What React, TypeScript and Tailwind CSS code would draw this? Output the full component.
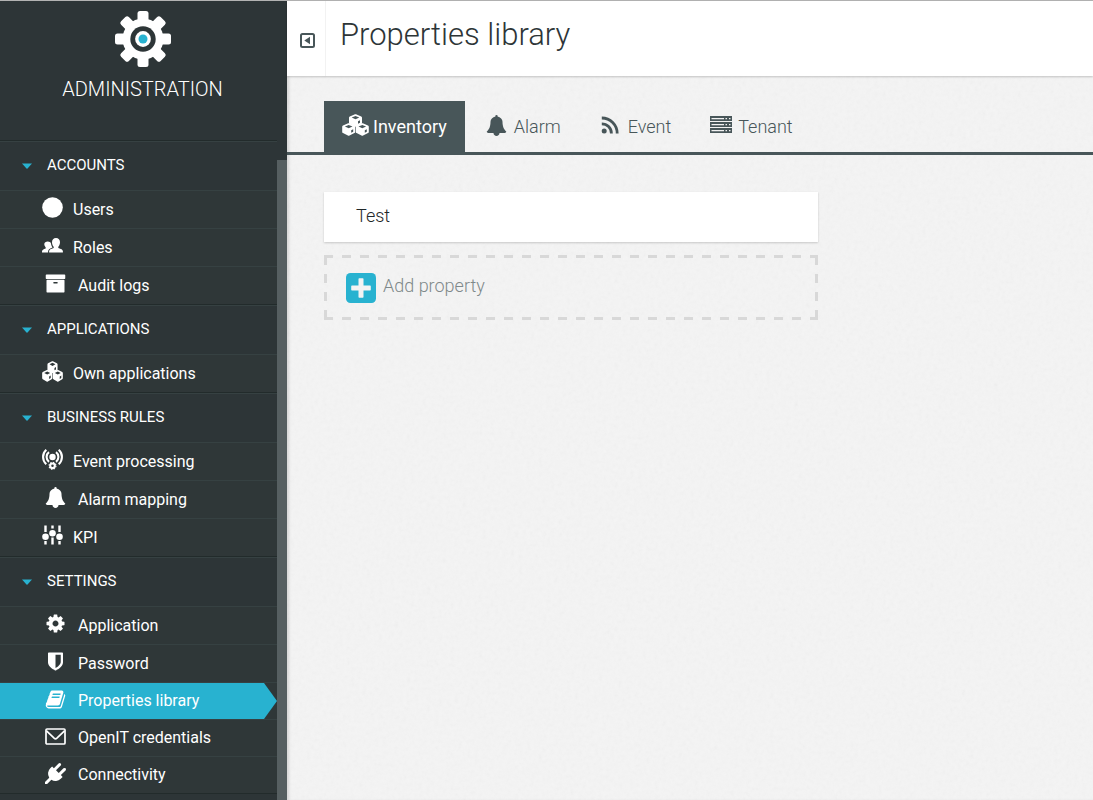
import React from "react";

type IconProps = { className?: string };

const BELL =
  "M1728 1408q0 52-38 90t-90 38h-448q0 106-75 181t-181 75-181-75-75-181h-448q-52 0-90-38t-38-90q50-42 91-88t85-119.500 74.500-158.500 50-206 19.500-260q0-152 117-282.500t307-158.500q-8-19-8-39 0-40 28-68t68-28 68 28 28 68q0 20-8 39 190 28 307 158.500t117 282.500q0 139 19.500 260t50 206 74.500 158.500 85 119.500 91 88z";
const COG =
  "M1152 896q0-106-75-181t-181-75-181 75-75 181 75 181 181 75 181-75 75-181zm512-109v222q0 12-8 23t-20 13l-185 28q-19 54-39 91 35 50 107 138 10 12 10 25t-9 23q-27 37-99 108t-94 71q-12 0-26-9l-138-108q-44 23-91 38-16 136-29 186-7 28-36 28h-222q-14 0-24.500-8.500t-11.500-21.500l-28-184q-49-16-90-37l-141 107q-10 9-25 9-14 0-25-11-126-114-165-168-7-10-7-23 0-12 8-23 15-21 51-66.500t54-70.500q-27-50-41-99l-183-27q-13-2-21-12.500t-8-23.500v-222q0-12 8-23t19-13l186-28q14-46 39-92-40-57-107-138-10-12-10-24 0-10 9-23 26-36 98.500-107.500t94.500-71.500q13 0 26 10l138 107q44-23 91-38 16-136 29-186 7-28 36-28h222q14 0 24.500 8.500t11.500 21.500l28 184q49 16 90 37l142-107q9-9 24-9 13 0 25 10 129 119 165 170 7 8 7 22 0 12-8 23-15 21-51 66.500t-54 70.500q26 50 41 98l183 28q13 2 21 12.500t8 23.500z";
const SHIELD =
  "M1344 960v-640h-448v1137q119-63 213-137 235-184 235-360zm192-768v768q0 86-33.500 170.500t-83 150-118 127.500-126.500 103-121 77.500-89.500 49.500-42.500 20q-12 6-26 6t-26-6q-16-7-42.500-20t-89.500-49.500-121-77.500-126.500-103-118-127.500-83-150-33.500-170.500v-768q0-26 19-45t45-19h1152q26 0 45 19t19 45z";
const BOOK =
  "M1703 478q40 57 18 129l-275 906q-19 64-76.500 107.500t-122.500 43.500h-923q-77 0-148.500-53.500t-99.500-131.500q-24-67-2-127 0-4 3-27t4-37q1-8-3-21.500t-3-19.500q2-11 8-21t16.500-23.500 16.500-23.500q23-38 45-91.500t30-91.500q3-10 .5-30t-.5-28q3-11 17-28t17-23q21-36 42-92t25-90q1-9-2.500-32t.5-28q4-13 22-30.500t22-22.500q19-26 42.500-84.500t27.500-96.500q1-8-3-25.500t-2-26.500q2-8 9-18t18-23 17-21q8-12 16.500-30.500t15-35 16-36 19.500-32 26.500-23.500 36-11.500 47.500 5.500l-1 3q38-9 51-9h761q74 0 114 56t18 130l-274 906q-36 119-71.500 153.500t-128.500 34.500h-869q-27 0-38 15-11 16-1 43 24 70 144 70h923q29 0 56-15.500t35-41.500l300-987q7-22 5-57 38 15 59 43zm-1064 2q-4 13 2 22.500t20 9.500h608q13 0 25.500-9.500t16.500-22.500l21-64q4-13-2-22.500t-20-9.500h-608q-13 0-25.500 9.500t-16.500 22.500zm-83 256q-4 13 2 22.500t20 9.500h608q13 0 25.500-9.500t16.500-22.500l21-64q4-13-2-22.500t-20-9.500h-608q-13 0-25.500 9.500t-16.500 22.500z";
const PLUG =
  "M1755 453q37 38 37 90.500t-37 90.500l-401 400 150 150-160 160q-163 163-389.500 186.500t-411.500-100.500l-362 362h-181v-181l362-362q-124-185-100.500-411.500t186.500-389.500l160-160 150 150 400-401q38-37 91-37t90 37 37 90.500-37 90.500l-400 401 234 234 401-400q38-37 91-37t90 37z";
const ARCHIVE =
  "M1088 832q0-26-19-45t-45-19h-256q-26 0-45 19t-19 45 19 45 45 19h256q26 0 45-19t19-45zm576-192v960q0 26-19 45t-45 19h-1408q-26 0-45-19t-19-45v-960q0-26 19-45t45-19h1408q26 0 45 19t19 45zm64-448v256q0 26-19 45t-45 19h-1536q-26 0-45-19t-19-45v-256q0-26 19-45t45-19h1536q26 0 45 19t19 45z";

const glyph = (d: string) =>
  function Glyph({ className }: IconProps) {
    return (
      <svg viewBox="0 0 1792 1792" fill="currentColor" fillRule="evenodd" aria-hidden="true" className={className}>
        <path d={d} />
      </svg>
    );
  };

const BellIcon = glyph(BELL);
const CogIcon = glyph(COG);
const ShieldIcon = glyph(SHIELD);
const BookIcon = glyph(BOOK);
const PlugIcon = glyph(PLUG);
const ArchiveIcon = glyph(ARCHIVE);

function CircleIcon({ className }: IconProps) {
  return (
    <svg viewBox="0 0 21 21" fill="currentColor" aria-hidden="true" className={className}>
      <circle cx="10.500" cy="10.500" r="10.300" />
    </svg>
  );
}

function PeopleIcon({ className }: IconProps) {
  return (
    <svg viewBox="0 0 21 21" fill="currentColor" aria-hidden="true" className={className}>
      <path d="M14 3c2.500 0 4 1.700 4 4.200 0 1.800-.7 3.500-1.700 4.500v1.200c2.800.8 4.600 1.700 4.600 3.400v1.200H7.100v-1.200c0-1.700 1.800-2.600 4.600-3.400v-1.200c-1-1-1.700-2.700-1.700-4.500C10 4.700 11.500 3 14 3z" />
      <path d="M5.800 6.500c1.600 0 2.800.7 3.200 1.900.1 1.400.6 2.900 1.500 4-2.500.8-4.200 2-4.400 3.900v1.200H0v-1c0-1.300 1.500-2.200 3.700-2.900v-1.200c-.9-.9-1.400-2.100-1.400-3.300 0-1.600 1.500-2.600 3.500-2.600z" />
    </svg>
  );
}

function Cube({ x, y }: { x: number; y: number }) {
  return (
    <path
      transform={`translate(${x} ${y})`}
      fillRule="evenodd"
      d="M6 .3q.5-.3 1 0l5.200 2.100q.8.400.8 1.300v5.200q0 .8-.8 1.200L7.300 12.500q-.8.400-1.600 0L.8 10.100Q0 9.700 0 8.900V3.700q0-.9.8-1.300zM6.500 1.900 2.700 3.500 6.500 5.200l3.800-1.700zM9 7.300v2.500l2-1V6.300z"
    />
  );
}

function CubesIcon({ className }: IconProps) {
  return (
    <svg viewBox="0 0 27 22" fill="currentColor" preserveAspectRatio="none" aria-hidden="true" className={className}>
      <Cube x={7} y={0} />
      <Cube x={0.200} y={9} />
      <Cube x={13.800} y={9} />
    </svg>
  );
}

function BroadcastIcon({ className }: IconProps) {
  return (
    <svg viewBox="0 0 21 21" fill="none" stroke="currentColor" strokeWidth="2.100" aria-hidden="true" className={className}>
      <circle cx="10.500" cy="8" r="3.200" fill="currentColor" stroke="none" />
      <path d="M7 3.200a6 6 0 0 0 0 9.600M14 3.200a6 6 0 0 1 0 9.600M4.300.8C0 4.500 0 11.500 4.300 15.200M16.700.8c4.300 3.700 4.300 10.700 0 14.400" />
      <circle cx="10.500" cy="16.800" r="2.300" />
      <circle cx="10.500" cy="16.800" r="3.500" strokeWidth="1.100" strokeDasharray="1.400 1.350" />
    </svg>
  );
}

function SlidersIcon({ className }: IconProps) {
  return (
    <svg viewBox="0 0 21 21" fill="currentColor" aria-hidden="true" className={className}>
      <path d="M2.300.5h2.400V7H2.300zM2.300 16h2.400v3.500H2.300zM9.300.5h2.400v3H9.300zM9.300 12.500h2.400v7H9.300zM16.300.5h2.400V7h-2.400zM16.300 16h2.400v3.500h-2.400z" />
      <circle cx="3.500" cy="11.800" r="3.300" />
      <circle cx="10.500" cy="8.200" r="3.300" />
      <circle cx="17.500" cy="11.800" r="3.300" />
    </svg>
  );
}

function EnvelopeIcon({ className }: IconProps) {
  return (
    <svg viewBox="0 0 21 21" fill="none" stroke="currentColor" strokeWidth="1.700" aria-hidden="true" className={className}>
      <rect x="1" y="3" width="19" height="15" rx="1" />
      <path d="m1.500 4.800 7.600 7.400q1.400 1.200 2.800 0l7.600-7.400" />
    </svg>
  );
}

function RssIcon({ className }: IconProps) {
  return (
    <svg viewBox="0 0 18 18" fill="none" stroke="currentColor" strokeWidth="2.800" aria-hidden="true" className={className}>
      <circle cx="3.200" cy="14.900" r="2.500" fill="currentColor" stroke="none" />
      <path d="M.8 7.800a9.600 9.600 0 0 1 9.600 9.600M.8 2a15.400 15.400 0 0 1 15.400 15.400" />
    </svg>
  );
}

function ServerIcon({ className }: IconProps) {
  const rows = [0, 6, 12];
  return (
    <svg viewBox="0 0 22 18" fill="currentColor" fillRule="evenodd" aria-hidden="true" className={className}>
      {rows.map((y) => (
        <path key={y} transform={`translate(0 ${y})`} d="M0 0h22v5H0zM1.500 2v1.200h12.500V2zM15.500 2v1.200H17V2zM19 2v1.200h1.500V2z" />
      ))}
    </svg>
  );
}

function GearLogo() {
  const teeth = [0, 45, 90, 135];
  return (
    <svg viewBox="-28 -28 56 56" aria-hidden="true" className="size-14">
      <g fill="#fff">
        <circle r="20.500" />
        {teeth.map((angle) => (
          <rect key={angle} x="-5.500" y="-28" width="11" height="56" rx="2.500" transform={`rotate(${angle})`} />
        ))}
      </g>
      <circle r="12.700" fill="#2d3537" />
      <circle r="7.900" fill="#fff" />
      <circle r="4.500" fill="#28b2d0" />
    </svg>
  );
}

type Item = { label: string; icon: React.ComponentType<IconProps>; narrow?: boolean; active?: boolean };

const sections: { title: string; items: Item[] }[] = [
  {
    title: "ACCOUNTS",
    items: [
      { label: "Users", icon: CircleIcon },
      { label: "Roles", icon: PeopleIcon },
      { label: "Audit logs", icon: ArchiveIcon, narrow: true },
    ],
  },
  { title: "APPLICATIONS", items: [{ label: "Own applications", icon: CubesIcon }] },
  {
    title: "BUSINESS RULES",
    items: [
      { label: "Event processing", icon: BroadcastIcon },
      { label: "Alarm mapping", icon: BellIcon, narrow: true },
      { label: "KPI", icon: SlidersIcon },
    ],
  },
  {
    title: "SETTINGS",
    items: [
      { label: "Application", icon: CogIcon, narrow: true },
      { label: "Password", icon: ShieldIcon, narrow: true },
      { label: "Properties library", icon: BookIcon, narrow: true, active: true },
      { label: "OpenIT credentials", icon: EnvelopeIcon, narrow: true },
      { label: "Connectivity", icon: PlugIcon, narrow: true },
    ],
  },
];

const tabs = [
  { label: "Inventory", icon: CubesIcon, size: "h-[22px] w-[27px]", active: true },
  { label: "Alarm", icon: BellIcon, size: "size-[21px]" },
  { label: "Event", icon: RssIcon, size: "size-[18px]" },
  { label: "Tenant", icon: ServerIcon, size: "h-[18px] w-[22px]" },
];

function NavItem({ label, icon: Icon, narrow, active }: Item) {
  return (
    <li className="h-[38px] border-t border-[#364142] bg-[#2f3738] nth-[n+3]:h-[37px] nth-[3]:last:h-[38px]">
      <a
        href="#"
        aria-current={active ? "page" : undefined}
        className={`flex h-full items-center gap-[10px] pl-[42px] text-base leading-5 text-white ${
          active ? "bg-[#28b2d0] [clip-path:polygon(0_0,calc(100%-13px)_0,100%_50%,calc(100%-13px)_100%,0_100%)]" : ""
        }`}
      >
        <span className={`mb-1 flex justify-center ${narrow ? "w-[26px]" : "w-[21px]"}`}>
          <Icon className="size-[21px]" />
        </span>
        {label}
      </a>
    </li>
  );
}

function Sidebar() {
  return (
    <aside className="flex w-[287px] shrink-0 flex-col overflow-hidden bg-[#2d3537] text-white">
      <div className="flex h-[139px] shrink-0 flex-col items-center pt-[10px] pr-[2px]">
        <GearLogo />
        <h2 className="mt-2 text-xl leading-7 font-light">ADMINISTRATION</h2>
      </div>
      <div className="flex min-h-0 flex-1">
        <nav className="flex-1">
          {sections.map((section) => (
            <section key={section.title} className="border-t border-[#222b2b]">
              <button type="button" className="flex h-[49px] w-full items-center border-t border-[#364142] pb-px pl-[22px] text-left text-[15px]">
                <svg viewBox="0 0 10 6" aria-hidden="true" className="mr-[15px] h-[6px] w-[10px]">
                  <path d="M0 .5h10L5.500 5.600q-.5.500-1 0z" fill="#28b2d0" />
                </svg>
                {section.title}
              </button>
              <ul>
                {section.items.map((item) => (
                  <NavItem key={item.label} {...item} />
                ))}
              </ul>
            </section>
          ))}
          <div className="border-t border-[#222b2b]" />
        </nav>
        <div className="mt-5 w-[10px] shrink-0 bg-[#565f61]" />
      </div>
    </aside>
  );
}

function PaperTexture() {
  return (
    <svg aria-hidden="true" className="pointer-events-none absolute inset-0 h-full w-full opacity-[0.06]">
      <filter id="paper">
        <feTurbulence type="fractalNoise" baseFrequency="0.25" numOctaves="3" stitchTiles="stitch" />
        <feColorMatrix type="saturate" values="0" />
      </filter>
      <rect width="100%" height="100%" filter="url(#paper)" />
    </svg>
  );
}

export default function App() {
  return (
    <div className="flex h-screen border-t border-[#b3b3b3] bg-[#f4f4f4] font-['Roboto',sans-serif]">
      <Sidebar />
      <div className="relative flex min-w-0 flex-1 flex-col shadow-[inset_3px_0_3px_-1px_rgba(0,0,0,0.12)]">
        <PaperTexture />
        <header className="relative flex h-[75px] shrink-0 bg-white shadow-[0_1px_2px_rgba(0,0,0,0.2)]">
          <button type="button" aria-label="Collapse menu" className="flex w-[39px] items-center justify-center border-r border-[#f2f2f2] pt-1 pl-[3px]">
            <svg viewBox="0 0 15 15" aria-hidden="true" className="size-[15px]">
              <rect x="1" y="1" width="13" height="13" rx="1.500" fill="none" stroke="#485659" strokeWidth="2" />
              <path d="M10 3.800v7.400L4.300 7.500z" fill="#485659" />
            </svg>
          </button>
          <h1 className="pt-[13px] pl-[14px] text-[31px] leading-[42px] font-light text-[#2d3537]">Properties library</h1>
        </header>
        <div role="tablist" className="relative mt-[25px] flex border-b-[3px] border-[#485659] pl-[37px]">
          {tabs.map(({ label, icon: Icon, size, active }) => (
            <button
              key={label}
              type="button"
              role="tab"
              aria-selected={Boolean(active)}
              className={`flex h-[51px] items-center gap-1 px-[18px] text-lg ${
                active ? "bg-[#485659] text-white" : "font-light text-[#485659]"
              }`}
            >
              <span className="mb-[3px] flex w-[27px] justify-center">
                <Icon className={size} />
              </span>
              {label}
            </button>
          ))}
        </div>
        <main className="relative mt-[37px] ml-[37px] flex w-full max-w-[494px] flex-col gap-[13px]">
          <div className="flex h-[50px] items-center bg-white pb-[2px] pl-8 text-lg font-light text-[#1f2729] shadow-[0_1px_2px_rgba(0,0,0,0.18)]">
            Test
          </div>
          <button
            type="button"
            className="flex h-[65px] items-center gap-[7px] bg-[image:repeating-linear-gradient(90deg,#d8d8d8_0_9px,transparent_9px_18px),repeating-linear-gradient(90deg,#d8d8d8_0_9px,transparent_9px_18px),repeating-linear-gradient(180deg,#d8d8d8_0_10px,transparent_10px_19px,#d8d8d8_19px_28px,transparent_28px_37px,#d8d8d8_37px_46px,transparent_46px_55px,#d8d8d8_55px_65px),repeating-linear-gradient(180deg,#d8d8d8_0_10px,transparent_10px_19px,#d8d8d8_19px_28px,transparent_28px_37px,#d8d8d8_37px_46px,transparent_46px_55px,#d8d8d8_55px_65px)] bg-[size:100%_3px,100%_3px,3px_100%,3px_100%] bg-[position:left_top,left_bottom,left_top,right_top] bg-no-repeat pl-[22px] text-lg font-light text-[#7f898a]"
          >
            <svg viewBox="0 0 30 30" aria-hidden="true" className="size-[30px]">
              <rect width="30" height="30" rx="4.500" fill="#28b2d0" />
              <path d="M13.200 5.200h3.600q.7 0 .7.700v6.600h6.600q.7 0 .7.700v3.600q0 .7-.7.700h-6.600v6.600q0 .7-.7.700h-3.600q-.7 0-.7-.7v-6.600H5.900q-.7 0-.7-.7v-3.600q0-.7.7-.7h6.600V5.900q0-.7.7-.7z" fill="#f3f3f3" />
            </svg>
            <span className="pb-[3px]">Add property</span>
          </button>
        </main>
      </div>
    </div>
  );
}
